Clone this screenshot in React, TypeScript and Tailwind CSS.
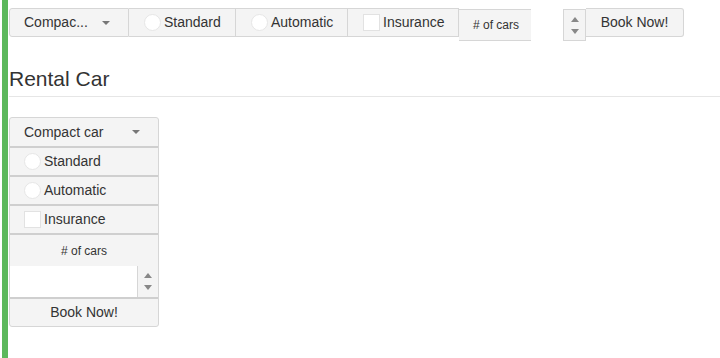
import React from "react";

const Radio = () => (
  <span className="inline-block w-[17px] h-[17px] rounded-full bg-white border border-[#e6e6e6] shrink-0" />
);
const Check = () => (
  <span className="inline-block w-[17px] h-[17px] bg-white border border-[#e2e2e2] shrink-0" />
);
const Caret = () => (
  <span className="inline-block w-0 h-0 border-l-[4px] border-r-[4px] border-t-[4px] border-l-transparent border-r-transparent border-t-[#777]" />
);
const Up = () => (
  <span className="inline-block w-0 h-0 border-l-[4px] border-r-[4px] border-b-[5px] border-l-transparent border-r-transparent border-b-[#888]" />
);
const Down = () => (
  <span className="inline-block w-0 h-0 border-l-[4px] border-r-[4px] border-t-[5px] border-l-transparent border-r-transparent border-t-[#888]" />
);

export default function App() {
  return (
    <div
      className="min-h-[358px] pl-[2px] bg-white text-[#333]"
      style={{ fontFamily: '"Liberation Sans", Arial, sans-serif' }}
    >
      <div className="min-h-[358px] border-l-[6px] border-[#5cb85c] pl-px pt-2">
        {/* Top toolbar */}
        <div className="flex items-start text-[14px]">
          <div className="flex items-center w-[120px] h-[29px] bg-[#f4f4f4] border border-[#d6d6d6] rounded-l-[3px] pl-[14px] pr-[18px] justify-between">
            <span>Compac...</span>
            <Caret />
          </div>
          <div className="flex items-center gap-[3px] w-[107px] h-[29px] bg-[#f4f4f4] border border-l-0 border-[#d6d6d6] pl-[15px]">
            <Radio />
            <span>Standard</span>
          </div>
          <div className="flex items-center gap-[3px] w-[112px] h-[29px] bg-[#f4f4f4] border border-l-0 border-[#d6d6d6] pl-[15px]">
            <Radio />
            <span>Automatic</span>
          </div>
          <div className="flex items-center gap-[3px] w-[111px] h-[29px] bg-[#f4f4f4] border border-l-0 border-[#d6d6d6] pl-[15px]">
            <Check />
            <span>Insurance</span>
          </div>
          <div className="flex mt-px h-[32px]">
            <div className="flex items-center w-[72px] h-full bg-[#f4f4f4] border border-l-0 border-[#d6d6d6] border-r-0 pl-[14px] text-[12px]">
              # of cars
            </div>
            <div className="w-[32px] h-full bg-white" />
            <div className="flex flex-col items-center justify-center gap-[7px] w-[23px] h-full bg-[#f4f4f4] border border-[#d6d6d6]">
              <Up />
              <Down />
            </div>
          </div>
          <div className="flex items-center justify-center w-[98px] h-[29px] bg-[#f4f4f4] border border-l-0 border-[#d6d6d6] rounded-r-[3px]">
            Book Now!
          </div>
        </div>

        {/* Heading */}
        <h2 className="mt-[27px] text-[21px] leading-[22px]">Rental Car</h2>
        <div className="mt-[6px] h-px bg-[#e6e6e6]" />

        {/* Vertical group */}
        <div className="mt-[20px] w-[150px] flex flex-col text-[14px] border border-[#d6d6d6] rounded-[3px] bg-[#f4f4f4] overflow-hidden">
          <div className="flex items-center justify-between h-[28px] pl-[14px] pr-[18px]">
            <span>Compact car</span>
            <Caret />
          </div>
          <div className="flex items-center gap-[3px] h-[29px] pl-[14px] border-t-2 border-[#cfcfcf]">
            <Radio />
            <span>Standard</span>
          </div>
          <div className="flex items-center gap-[3px] h-[29px] pl-[14px] border-t-2 border-[#cfcfcf]">
            <Radio />
            <span>Automatic</span>
          </div>
          <div className="flex items-center gap-[3px] h-[29px] pl-[14px] border-t-2 border-[#cfcfcf]">
            <Check />
            <span>Insurance</span>
          </div>
          <div className="flex items-center justify-center h-[33px] border-t-2 border-[#cfcfcf] text-[12px]">
            # of cars
          </div>
          <div className="flex h-[31px] bg-white">
            <div className="flex-1" />
            <div className="flex flex-col items-center justify-center gap-[7px] w-[21px] bg-[#f4f4f4] border-l border-[#d6d6d6]">
              <Up />
              <Down />
            </div>
          </div>
          <div className="flex items-center justify-center h-[29px] border-t-2 border-[#cfcfcf]">
            Book Now!
          </div>
        </div>
      </div>
    </div>
  );
}
